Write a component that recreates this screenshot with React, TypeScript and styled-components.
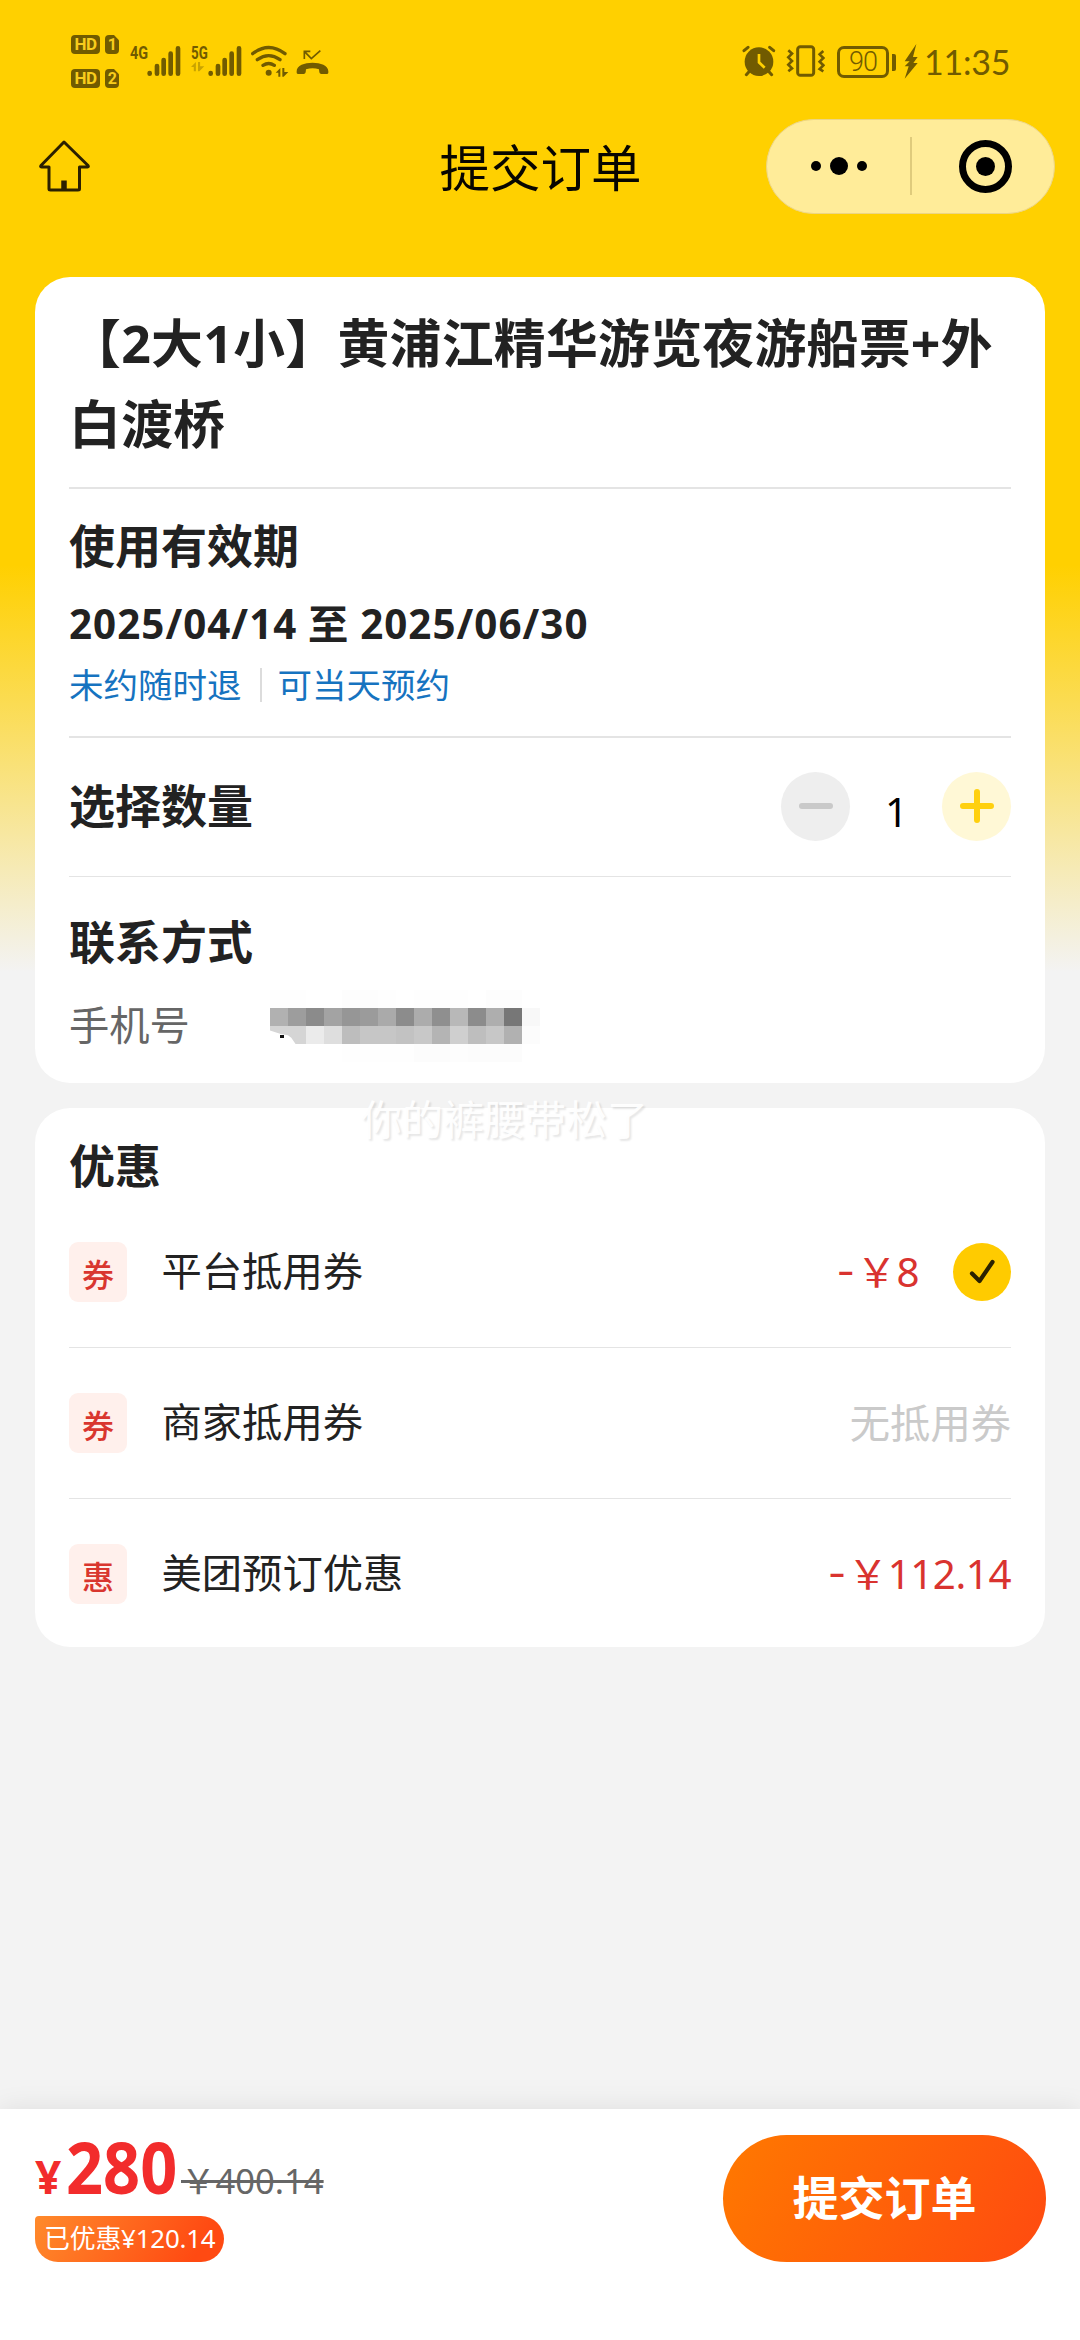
import React from "react";
import styled, { createGlobalStyle } from "styled-components";

const INK = "#222222";
const STATUS = "#715b00";
const YELLOW = "#ffd000";
const RED = "#d9332f";
const LINE = "#e4e4e4";

const GlobalStyle = createGlobalStyle`
  *, *::before, *::after { box-sizing: border-box; }
  html, body { margin: 0; padding: 0; background: #f3f3f3; }
  body {
    font-family: "Noto Sans", "Noto Sans CJK SC", sans-serif;
    color: ${INK};
    -webkit-font-smoothing: antialiased;
  }
  button { font: inherit; border: 0; padding: 0; }
`;

const Page = styled.div`
  position: relative;
  width: 1080px;
  height: 2340px;
  display: flex;
  flex-direction: column;
  overflow: hidden;
  background: linear-gradient(180deg, ${YELLOW} 0, ${YELLOW} 565px, #f3f3f3 972px);
`;

/* ---------- status bar ---------- */

const StatusBar = styled.header`
  display: flex;
  justify-content: space-between;
  height: 114px;
  padding: 20px 73px 14px 71px;
  color: ${STATUS};
`;

const StatusGroup = styled.div`
  display: flex;
  align-items: flex-start;
  height: 80px;
`;

const SimColumn = styled.div`
  display: flex;
  flex-direction: column;
  gap: 15px;
  padding-top: 15px;
`;

const SimRow = styled.div`
  display: flex;
  gap: 5px;
`;

const SimBadge = styled.span<{ $slot?: boolean }>`
  display: flex;
  align-items: center;
  justify-content: center;
  width: ${(p) => (p.$slot ? 14 : 29)}px;
  height: 19px;
  border-radius: 4px;
  background: ${STATUS};
  color: #f8cd1c;
  font: 700 ${(p) => (p.$slot ? 16 : 17)}px/19px Roboto, sans-serif;
  letter-spacing: -0.5px;
  clip-path: ${(p) => (p.$slot ? "polygon(0 0, 64% 0, 100% 28%, 100% 100%, 0 100%)" : "none")};
`;

const Network = styled.div<{ $left: number; $squeeze: number }>`
  margin-left: ${(p) => p.$left}px;
  width: 17px;
  padding-top: 24px;
  display: flex;
  flex-direction: column;
  span {
    font: 700 18px/18px Roboto, sans-serif;
    transform: scaleX(${(p) => p.$squeeze});
    transform-origin: left;
  }
`;

const StatusIcon = styled.svg<{ $left?: number }>`
  display: block;
  flex: none;
  height: 80px;
  margin-left: ${(p) => p.$left ?? 0}px;
`;

const Battery = styled.div`
  display: flex;
  align-items: center;
  margin: 26px 0 0 12px;
  &::after {
    content: "";
    width: 4px;
    height: 17px;
    margin-left: 3px;
    border-radius: 0 2px 2px 0;
    background: ${STATUS};
  }
`;

const BatteryBody = styled.div`
  display: flex;
  align-items: center;
  justify-content: center;
  width: 52px;
  height: 32px;
  border: 3px solid ${STATUS};
  border-radius: 7px;
  font: 300 27px/26px Roboto, sans-serif;
  letter-spacing: -1px;
`;

const Clock = styled.time`
  margin: 17px 0 0 6px;
  font: 400 34px/50px Lato, sans-serif;
  width: 83px;
  white-space: nowrap;
  letter-spacing: -0.2px;
`;

/* ---------- navigation ---------- */

const NavBar = styled.nav`
  display: grid;
  grid-template-columns: 1fr auto 1fr;
  align-items: center;
  height: 104px;
  margin-bottom: 59px;
  padding: 0 25px 0 38px;
`;

const NavTitle = styled.h1`
  margin: 4px 0 0;
  padding-right: 12px;
  font-size: 50.5px;
  line-height: 70px;
  font-weight: 400;
  color: #080600;
`;

const Capsule = styled.div`
  justify-self: end;
  display: flex;
  align-items: center;
  width: 289px;
  height: 95px;
  border: 1.5px solid #ecd586;
  border-radius: 48px;
  background: #ffec99;
`;

const CapsuleHalf = styled.div<{ $first?: boolean }>`
  width: ${(p) => (p.$first ? 145 : 141)}px;
  display: flex;
  align-items: center;
  justify-content: center;
  height: 58px;
  gap: 9px;
  padding-left: ${(p) => (p.$first ? 0 : 6)}px;
  border-right: ${(p) => (p.$first ? "2px solid #dfcb7c" : "0")};
`;

const Dot = styled.i<{ $size: number }>`
  width: ${(p) => p.$size}px;
  height: ${(p) => p.$size}px;
  border-radius: 50%;
  background: #000;
`;

const Ring = styled.div`
  display: flex;
  align-items: center;
  justify-content: center;
  width: 53px;
  height: 53px;
  border: 7px solid #000;
  border-radius: 50%;
`;

/* ---------- cards ---------- */

const Card = styled.section`
  margin: 0 35px 25px;
  padding: 0 34px;
  border-radius: 35px;
  background: #fff;
`;

const Section = styled.div<{ $top: number; $bottom: number; $line?: number }>`
  padding: ${(p) => p.$top}px 0 ${(p) => p.$bottom}px;
  border-bottom: ${(p) => p.$line ?? 0}px solid ${LINE};
`;

const ProductTitle = styled.h2`
  margin: 0;
  font-size: 51.84px;
  line-height: 81px;
  font-weight: 700;
  letter-spacing: 0.3px;
`;

const Heading = styled.h3`
  margin: 0;
  padding-bottom: 2px;
  font-size: 46px;
  line-height: 58px;
  font-weight: 700;
`;

const DateRange = styled.p`
  margin: 23px 0 16px;
  font-size: 40.3px;
  line-height: 50px;
  font-weight: 700;
  letter-spacing: 1.05px;
  word-spacing: -0.8px;
  white-space: nowrap;
`;

const Policies = styled.div`
  display: flex;
  align-items: center;
  height: 40px;
  font-size: 34.5px;
  line-height: 40px;
  color: #1673c0;
  span + span {
    margin-left: 18px;
    padding-left: 18px;
    background: linear-gradient(#dcdcdc, #dcdcdc) 0 50% / 2px 34px no-repeat;
  }
`;

const QuantityRow = styled.div`
  display: flex;
  align-items: center;
  justify-content: space-between;
  height: 139px;
  padding-bottom: 2px;
  border-bottom: 1px solid ${LINE};
`;

const Stepper = styled.div`
  display: flex;
  align-items: center;
`;

const StepButton = styled.button<{ $active?: boolean }>`
  display: flex;
  align-items: center;
  justify-content: center;
  width: 69px;
  height: 69px;
  border-radius: 50%;
  background: ${(p) => (p.$active ? "#fff8d6" : "#eeeeee")};
  color: ${(p) => (p.$active ? "#ffd00f" : "#c9c9c9")};
`;

const Count = styled.span`
  width: 92px;
  padding: 11px 0 0 1px;
  text-align: center;
  font-size: 40.3px;
  line-height: 50px;
  color: #000;
`;

const PhoneRow = styled.div`
  display: flex;
  align-items: center;
  height: 50px;
  margin-top: 28px;
`;

const PhoneLabel = styled.span`
  width: 201px;
  font-size: 40.3px;
  line-height: 50px;
  color: #666;
`;

const Mosaic = styled.div`
  flex: none;
  display: grid;
  grid-template-columns: repeat(15, 18px);
  grid-auto-rows: 18px;
  margin-top: 2px;
`;

const Cell = styled.i<{ $tone: string; $cut?: string }>`
  background: #${(p) => p.$tone};
  clip-path: ${(p) => p.$cut ?? "none"};
`;

const Speck = styled.i`
  position: relative;
  background: linear-gradient(#111, #111) 10px 9px / 4px 3px no-repeat;
  &::before {
    content: "";
    position: absolute;
    inset: 0;
    background: #d5d5d5;
    clip-path: polygon(0 0, 100% 0, 100% 52%, 60% 45%, 0 25%);
  }
`;

/* ---------- discounts ---------- */

const DiscountRow = styled.div<{ $last?: boolean }>`
  display: flex;
  align-items: center;
  height: ${(p) => (p.$last ? 148 : 151)}px;
  padding-top: ${(p) => (p.$last ? 2 : 0)}px;
  border-bottom: ${(p) => (p.$last ? "0" : `1px solid ${LINE}`)};
  font-size: 40.3px;
  line-height: 56px;
`;

const Badge = styled.span`
  width: 58px;
  height: 60px;
  padding-top: 3px;
  border-radius: 9px;
  background: #fff0ec;
  color: #d9362f;
  font-size: 32px;
  line-height: 60px;
  font-weight: 500;
  text-align: center;
`;

const DiscountLabel = styled.span`
  flex: 1;
  margin: -2px 0 0 34.5px;
`;

const Amount = styled.span<{ $muted?: boolean }>`
  display: flex;
  margin-top: -1px;
  color: ${(p) => (p.$muted ? "#cacaca" : RED)};
  letter-spacing: ${(p) => (p.$muted ? 0 : -0.45)}px;
`;

const Minus = styled.span`
  margin-right: 2px;
  font-family: Inter, sans-serif;
`;

const CheckMark = styled.span`
  display: flex;
  align-items: center;
  justify-content: center;
  width: 58px;
  height: 58px;
  margin-left: 34px;
  border-radius: 50%;
  background: #ffcb00;
`;

/* ---------- footer ---------- */

const Footer = styled.footer`
  display: flex;
  justify-content: space-between;
  height: 231px;
  margin-top: auto;
  padding: 0 34px 0 35px;
  background: #fff;
  box-shadow: 0 -2px 24px rgba(0, 0, 0, 0.08);
`;

const Totals = styled.div`
  display: flex;
  flex-direction: column;
  align-items: flex-start;
  padding-top: 21px;
`;

const PriceLine = styled.div`
  display: flex;
  align-items: baseline;
  height: 72px;
  line-height: 72px;
  color: #f22c2c;
  font-weight: 700;
`;

const Currency = styled.span`
  width: 31px;
  font-size: 46px;
`;

const Price = styled.span`
  width: 115px;
  font-size: 72px;
  transform: scaleX(0.9);
  transform-origin: left;
`;

const OldPrice = styled.s`
  font-size: 34.56px;
  font-weight: 400;
  color: #666;
  text-decoration-thickness: 3px;
`;

const SavedTag = styled.span`
  width: 189px;
  height: 46px;
  margin-top: 14px;
  padding-left: 9px;
  border-radius: 4px 23px 23px 23px;
  background: linear-gradient(120deg, #ff8a2b, #ff4a12 85%);
  color: #fff;
  font-size: 25.9px;
  line-height: 45px;
  white-space: nowrap;
  letter-spacing: -0.2px;
`;

const SubmitButton = styled.button`
  width: 323px;
  height: 127px;
  margin-top: 26px;
  padding-bottom: 8px;
  border-radius: 64px;
  background: linear-gradient(120deg, #ff7900, #ff4a10);
  color: #fff;
  font-size: 46px;
  font-weight: 700;
`;

const Toast = styled.div`
  position: absolute;
  top: 1089px;
  left: 361px;
  font-size: 41px;
  line-height: 60px;
  color: rgba(255, 255, 255, 0.95);
  text-shadow: 2px 2px 2px rgba(0, 0, 0, 0.1);
  white-space: nowrap;
`;

const SignalBars = () => (
  <StatusIcon width="34" viewBox="0 0 102 240" stroke={STATUS} strokeWidth="14" strokeLinecap="round">
    <path d="M8 159v2M30 138v23M50 120v41M71 101v60M93 85v76" />
  </StatusIcon>
);

const DataArrows = ({ x, y, fill }: { x: number; y: number; fill: string }) => (
  <path
    transform={`translate(${x} ${y})`}
    fill={fill}
    d="M0 14 14 0v26H8V14zM20 0h6v12h12L24 26h-4z"
  />
);

const HomeIcon = () => (
  <svg width="54" height="54" viewBox="0 0 54 54" fill="none" stroke="#2b2000" strokeWidth="3" strokeLinejoin="round">
    <path d="M26 3 50 26.500Q51 28 49.500 28H41.500V50Q41.500 51 40 51H12.500Q11 51 11 50V28H3.500Q2 28 3 26.500Z" />
    <path d="M26 41.500v8.500" strokeWidth="5.500" />
  </svg>
);

const topTones = "b1 9d 8b a3 96 9b aa 8c ac 8f b8 8c ae 77 f8".split(" ");
const bottomTones = "d5 d5 eb de bd c6 c6 c2 c8 b4 cf be c7 b1 fc".split(" ");
const haloAbove = "fe fe ff ff fd fd fe ff fe fe fe ff fd fd ff".split(" ");
const haloBelow = "ff ff ff ff fe fe fe fe fc fc fd fc fc fc ff".split(" ");
const gray = (t: string) => t + t + t;

const discounts = [
  { mark: "券", label: "平台抵用券", value: "8", checked: true },
  { mark: "券", label: "商家抵用券", value: null, checked: false },
  { mark: "惠", label: "美团预订优惠", value: "112.14", checked: false },
];

export default function App() {
  return (
    <>
      <GlobalStyle />
      <Page>
        <StatusBar>
          <StatusGroup>
            <SimColumn>
              <SimRow>
                <SimBadge>HD</SimBadge>
                <SimBadge $slot>1</SimBadge>
              </SimRow>
              <SimRow>
                <SimBadge>HD</SimBadge>
                <SimBadge $slot>2</SimBadge>
              </SimRow>
            </SimColumn>
            <Network $left={11} $squeeze={0.8}>
              <span>4G</span>
            </Network>
            <SignalBars />
            <Network $left={10} $squeeze={0.74}>
              <span>5G</span>
              <svg width="14" height="10" viewBox="0 0 40 28">
                <DataArrows x={0} y={0} fill="#c9a300" />
              </svg>
            </Network>
            <SignalBars />
            <StatusIcon $left={9} width="38" viewBox="634 0 114 240" fill="none" stroke={STATUS} strokeWidth="10" strokeLinecap="round">
              <path d="M639 101Q687 64 736 101M653 119Q687 95 721 119M670 136Q687 125 704 136" />
              <circle cx="687" cy="158" r="9" fill={STATUS} stroke="none" />
              <g stroke="none">
                <DataArrows x={708} y={144} fill={STATUS} />
              </g>
            </StatusIcon>
            <StatusIcon $left={7} width="33" viewBox="766 0 99 240" fill="none" stroke={STATUS}>
              <path d="M791 117V94h18M791 94l21 22 27-24" strokeWidth="5" />
              <path
                d="M768 154c0-34 95-34 95 0v4q0 4-5 4h-16q-5 0-6-5l-1-9q-19-6-39 0l-1 9q-1 5-6 5h-16q-5 0-5-4z"
                fill={STATUS}
                stroke="none"
              />
            </StatusIcon>
          </StatusGroup>

          <StatusGroup>
            <StatusIcon width="34" viewBox="66 0 102 240" fill={STATUS}>
              <circle cx="117" cy="125" r="43" />
              <path d="M72 92l12-10M149 82l12 10M87 155l-8 9M147 155l8 9" stroke={STATUS} strokeWidth="9" strokeLinecap="round" />
              <path d="M117 102v25l17 16" fill="none" stroke={YELLOW} strokeWidth="8" />
            </StatusIcon>
            <StatusIcon $left={10} width="39" viewBox="196 0 117 240" fill="none" stroke={STATUS} strokeWidth="8">
              <rect x="231" y="80" width="48" height="86" rx="8" strokeWidth="9" />
              <path d="M203 91l11 10-11 11 11 11-11 11 11 11-11 9M308 93l-11 10 11 11-11 11 11 11-11 11 11 7" />
            </StatusIcon>
            <Battery>
              <BatteryBody>90</BatteryBody>
            </Battery>
            <StatusIcon $left={8} width="14" viewBox="551 0 42 240" fill={STATUS}>
              <path d="M588 72 553 124h15l-15 15h12l-12 37 39-47h-13l13-18h-14z" />
            </StatusIcon>
            <Clock>11:35</Clock>
          </StatusGroup>
        </StatusBar>

        <NavBar>
          <HomeIcon />
          <NavTitle>提交订单</NavTitle>
          <Capsule>
            <CapsuleHalf $first>
              <Dot $size={10} />
              <Dot $size={18} />
              <Dot $size={10} />
            </CapsuleHalf>
            <CapsuleHalf>
              <Ring>
                <Dot $size={19} />
              </Ring>
            </CapsuleHalf>
          </Capsule>
        </NavBar>

        <Card>
          <Section $top={26} $bottom={22} $line={2}>
            <ProductTitle>【2大1小】黄浦江精华游览夜游船票+外白渡桥</ProductTitle>
          </Section>
          <Section $top={27} $bottom={31} $line={2}>
            <Heading>使用有效期</Heading>
            <DateRange>2025/04/14 至 2025/06/30</DateRange>
            <Policies>
              <span>未约随时退</span>
              <span>可当天预约</span>
            </Policies>
          </Section>
          <QuantityRow>
            <Heading>选择数量</Heading>
            <Stepper>
              <StepButton aria-label="减少">
                <svg width="36" height="36" viewBox="0 0 36 36" stroke="currentColor" strokeWidth="6" strokeLinecap="round">
                  <path d="M4 18h28" />
                </svg>
              </StepButton>
              <Count>1</Count>
              <StepButton $active aria-label="增加">
                <svg width="36" height="36" viewBox="0 0 36 36" stroke="currentColor" strokeWidth="6" strokeLinecap="round">
                  <path d="M4 18h28M18 4v28" />
                </svg>
              </StepButton>
            </Stepper>
          </QuantityRow>
          <Section $top={35} $bottom={33}>
            <Heading>联系方式</Heading>
            <PhoneRow>
              <PhoneLabel>手机号</PhoneLabel>
              <Mosaic>
                {haloAbove.map((t, i) => (
                  <Cell key={`a${i}`} $tone={gray(t)} />
                ))}
                {topTones.map((t, i) => (
                  <Cell key={`t${i}`} $tone={gray(t)} />
                ))}
                {bottomTones.map((t, i) =>
                  i === 0 ? (
                    <Speck key="b0" />
                  ) : (
                    <Cell
                      key={`b${i}`}
                      $tone={gray(t)}
                      $cut={i === 1 ? "polygon(0 0, 100% 0, 100% 100%, 42% 100%, 18% 65%, 0 52%)" : undefined}
                    />
                  )
                )}
                {haloBelow.map((t, i) => (
                  <Cell key={`h${i}`} $tone={gray(t)} />
                ))}
              </Mosaic>
            </PhoneRow>
          </Section>
        </Card>

        <Card>
          <Section $top={28} $bottom={1}>
            <Heading>优惠</Heading>
          </Section>
          {discounts.map((d, i) => (
            <DiscountRow key={d.label} $last={i === discounts.length - 1}>
              <Badge>{d.mark}</Badge>
              <DiscountLabel>{d.label}</DiscountLabel>
              {d.value ? (
                <Amount>
                  <Minus>-</Minus>￥{d.value}
                </Amount>
              ) : (
                <Amount $muted>无抵用券</Amount>
              )}
              {d.checked && (
                <CheckMark>
                  <svg width="30" height="30" viewBox="0 0 30 30" fill="none" stroke="#2b2200" strokeWidth="4.200" strokeLinecap="round" strokeLinejoin="round">
                    <path d="M5 16.500 12.500 24 25.500 5" />
                  </svg>
                </CheckMark>
              )}
            </DiscountRow>
          ))}
        </Card>

        <Footer>
          <Totals>
            <PriceLine>
              <Currency>¥</Currency>
              <Price>280</Price>
              <OldPrice>￥400.14</OldPrice>
            </PriceLine>
            <SavedTag>已优惠¥120.14</SavedTag>
          </Totals>
          <SubmitButton>提交订单</SubmitButton>
        </Footer>

        <Toast>你的裤腰带松了</Toast>
      </Page>
    </>
  );
}
